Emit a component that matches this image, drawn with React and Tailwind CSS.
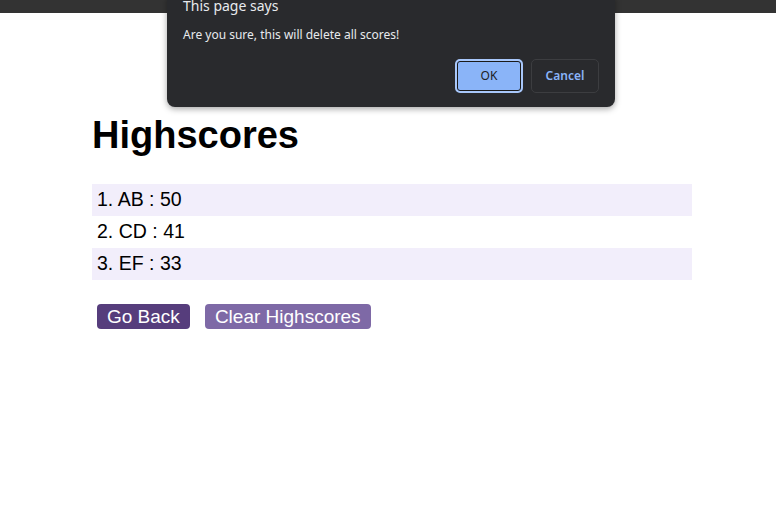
import React from 'react';

const scores = [
  { name: 'AB', score: 50 },
  { name: 'CD', score: 41 },
  { name: 'EF', score: 33 },
];

const ConfirmDialog = () => (
  <div className="absolute left-[167px] top-[-4px] w-[448px] h-[111px] bg-[#292a2d] rounded-b-[8px] shadow-[0_2px_6px_rgba(0,0,0,0.35)] font-['Noto_Sans','Open_Sans',sans-serif] flex flex-col px-[16px]">
    <div className="text-[14px] leading-[20px] text-[#e8eaed] whitespace-nowrap">This page says</div>
    <div className="mt-[10px] text-[12px] leading-[18px] text-[#e8eaed]">
      Are you sure, this will delete all scores!
    </div>
    <div className="mt-[15px] flex justify-end gap-[8px]">
      <button className="w-[68px] h-[34px] rounded-[5px] bg-[#8ab4f8] border-2 border-[#a8c7fa] outline outline-1 outline-[#1a1a1a] -outline-offset-[3px] text-[12px] text-[#202124]">
        OK
      </button>
      <button className="w-[68px] h-[34px] rounded-[5px] border border-[#3c3d40] text-[12px] font-semibold text-[#8ab4f8]">
        Cancel
      </button>
    </div>
  </div>
);

const App = () => {
  return (
    <div className="relative w-[776px] h-[513px] bg-white overflow-hidden font-['Liberation_Sans',Arial,sans-serif]">
      {/* top bar */}
      <div className="h-[13px] bg-[#333333]"></div>

      <main className="pl-[92px] pt-[100px]">
        <h1 className="text-[38px] leading-[44px] font-bold text-black">Highscores</h1>

        <ol className="mt-[27px] w-[600px]">
          {scores.map((s, i) => (
            <li
              key={s.name}
              className={`h-[32px] pl-[5px] flex items-center text-[19.5px] text-black ${i % 2 === 0 ? 'bg-[#f2eefb]' : 'bg-white'}`}
            >
              {i + 1}. {s.name} : {s.score}
            </li>
          ))}
        </ol>

        <div className="mt-[24px] ml-[5px] flex gap-[15px]">
          <button className="h-[25px] px-[10px] rounded-[4px] bg-[#563d7c] text-white text-[19px] leading-[25px]">
            Go Back
          </button>
          <button className="h-[25px] px-[10px] rounded-[4px] bg-[#7e69a6] text-white text-[19px] leading-[25px]">
            Clear Highscores
          </button>
        </div>
      </main>

      <ConfirmDialog />
    </div>
  );
};

export default App;
